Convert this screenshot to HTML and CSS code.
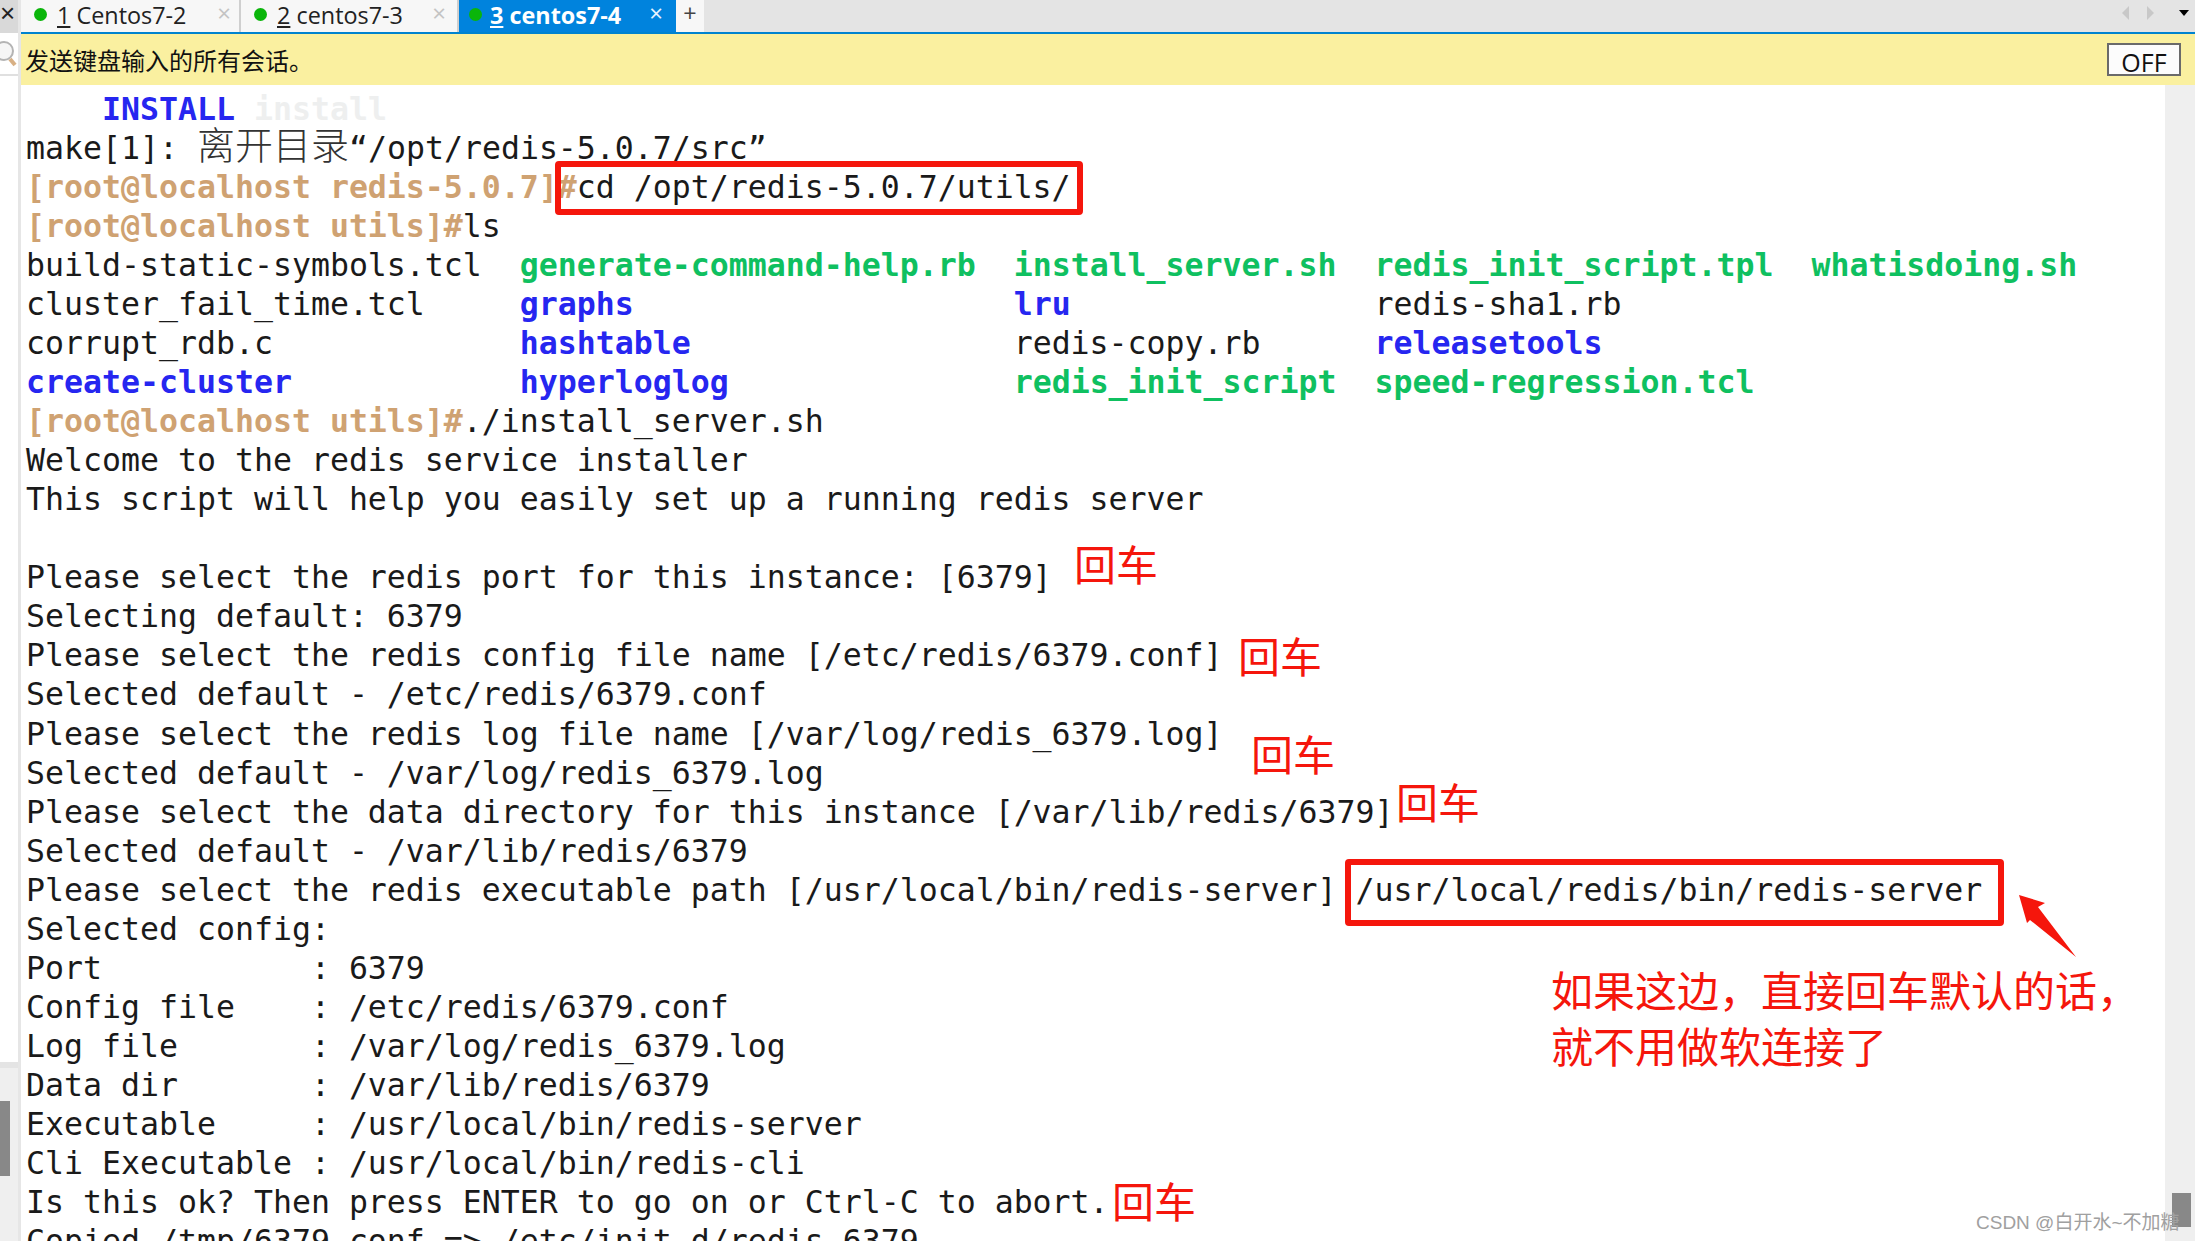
FILE: index.html
```html
<!DOCTYPE html>
<html>
<head>
  <title>centos7-4</title>
  <link rel="stylesheet" href="styles.css">
</head>
<body>

  <div class="app">

    <!-- Left strip -->
    <div class="side">
      <div class="side-close">×</div>
      <div class="side-search">
        <svg width="20" height="32" viewBox="0 0 20 32">
          <circle cx="4" cy="11" r="9" fill="#f6f6f6" stroke="#b4b4b4" stroke-width="2"/>
          <path d="M10 19 L15 25" stroke="#d8b084" stroke-width="4"/>
        </svg>
      </div>
      <div class="side-rest">
        <div class="side-lower">
          <div class="side-thumb"></div>
        </div>
      </div>
    </div>

    <div class="main">

      <!-- Tabs -->
      <div class="tabs">
        <div class="tab tab-1"><span class="dot"></span><span><u>1</u> Centos7-2</span><span class="tab-x">×</span></div>
        <div class="tab tab-2"><span class="dot"></span><span><u>2</u> centos7-3</span><span class="tab-x">×</span></div>
        <div class="tab tab-3 active"><span class="dot"></span><span><u>3</u> centos7-4</span><span class="tab-x">×</span></div>
        <div class="tab-add">+</div>
        <div class="tab-nav">
          <span class="arrow-left"></span>
          <span class="arrow-right"></span>
          <span class="arrow-down"></span>
        </div>
      </div>

      <!-- Send to all banner -->
      <div class="banner">
        <span>发送键盘输入的所有会话。</span>
        <button class="off">OFF</button>
      </div>

      <div class="body">
        <pre class="term">    <b class="blue">INSTALL</b> <b class="ghost">install</b>
make[1]: <span class="cjk">离开目录</span>“/opt/redis-5.0.7/src”
<b class="prompt">[root@localhost redis-5.0.7]#</b>cd /opt/redis-5.0.7/utils/
<b class="prompt">[root@localhost utils]#</b>ls
build-static-symbols.tcl  <b class="green">generate-command-help.rb</b>  <b class="green">install_server.sh</b>  <b class="green">redis_init_script.tpl</b>  <b class="green">whatisdoing.sh</b>
cluster_fail_time.tcl     <b class="blue">graphs</b>                    <b class="blue">lru</b>                redis-sha1.rb          
corrupt_rdb.c             <b class="blue">hashtable</b>                 redis-copy.rb      <b class="blue">releasetools</b>
<b class="blue">create-cluster</b>            <b class="blue">hyperloglog</b>               <b class="green">redis_init_script</b>  <b class="green">speed-regression.tcl</b>
<b class="prompt">[root@localhost utils]#</b>./install_server.sh
Welcome to the redis service installer
This script will help you easily set up a running redis server

Please select the redis port for this instance: [6379]
Selecting default: 6379
Please select the redis config file name [/etc/redis/6379.conf]
Selected default - /etc/redis/6379.conf
Please select the redis log file name [/var/log/redis_6379.log]
Selected default - /var/log/redis_6379.log
Please select the data directory for this instance [/var/lib/redis/6379]
Selected default - /var/lib/redis/6379
Please select the redis executable path [/usr/local/bin/redis-server] /usr/local/redis/bin/redis-server
Selected config:
Port           : 6379
Config file    : /etc/redis/6379.conf
Log file       : /var/log/redis_6379.log
Data dir       : /var/lib/redis/6379
Executable     : /usr/local/bin/redis-server
Cli Executable : /usr/local/bin/redis-cli
Is this ok? Then press ENTER to go on or Ctrl-C to abort.
Copied /tmp/6379.conf => /etc/init.d/redis_6379</pre>
        <div class="scrollbar"><div class="scroll-thumb"></div></div>
      </div>
    </div>

    <!-- Red notes drawn on top of the screenshot -->
    <div class="box box-cd"></div>
    <div class="box box-path"></div>
    <div class="note n1">回车</div>
    <div class="note n2">回车</div>
    <div class="note n3">回车</div>
    <div class="note n4">回车</div>
    <div class="note n5">回车</div>
    <div class="note n-big">如果这边，直接回车默认的话，<br>就不用做软连接了</div>
    <svg class="arrow" width="70" height="70" viewBox="0 0 70 70">
      <path d="M3 3 L29 11 L22 15 L60 65 L14 28 L11 31 Z" fill="#f5160c"/>
    </svg>
    <div class="mark">CSDN @白开水~不加糖</div>

  </div>

</body>
</html>
```

FILE: styles.css
```css
html, body {
  margin: 0;
  height: 100%;
  overflow: hidden;
  background-color: #fff;
}

.app {
  position: relative;
  display: flex;
  width: 2195px;
  height: 1241px;
  overflow: hidden;
}

/* Left strip */
.side {
  width: 21px;
  flex-shrink: 0;
  display: flex;
  flex-direction: column;
  border-right: 3px solid #e6e6e6;
  box-sizing: border-box;
}

.side-close {
  height: 33px;
  background-color: #d9d9d9;
  font: 26px/27px "Liberation Sans", sans-serif;
  color: #222;
  margin-left: -6px;
  padding-left: 6px;
  overflow: hidden;
  white-space: nowrap;
}

.side-search {
  height: 43px;
  padding-top: 7px;
  box-sizing: border-box;
  border-bottom: 2px solid #e0e0e0;
}

.side-rest {
  flex-grow: 1;
  display: flex;
  flex-direction: column;
  justify-content: flex-end;
}

.side-lower {
  height: 179px;
  border-top: 6px solid #e4e4e4;
  background-color: #efefef;
  padding-top: 33px;
  box-sizing: border-box;
}

.side-thumb {
  width: 10px;
  height: 75px;
  background-color: #888;
}

.main {
  flex-grow: 1;
  min-width: 0;
  display: flex;
  flex-direction: column;
}

/* Tabs */
.tabs {
  height: 32px;
  display: flex;
  background-color: #e4e4e4;
  border-bottom: 2px solid #0083cf;
  font-family: "Open Sans", "Noto Sans", sans-serif;
  font-size: 23.4px;
  color: #222;
}

.tab {
  display: flex;
  align-items: center;
  background-color: #f7f7f7;
  border-right: 2px solid #cfcfcf;
  box-sizing: border-box;
  padding-left: 13px;
  padding-bottom: 3px;
  position: relative;
}

.tab-1 { width: 220px; }
.tab-2 { width: 218px; }
.tab-3 { width: 217px; padding-left: 10px; }

.tab.active {
  background-color: #0083dd;
  color: #fff;
  font-weight: bold;
  border-right: none;
}

.dot {
  width: 13px;
  height: 13px;
  border-radius: 50%;
  background-color: #0ab50a;
  margin-right: 10px;
}

.tab-3 .dot {
  margin-right: 8px;
}

.tab-x {
  position: absolute;
  right: 8px;
  top: 3px;
  color: #c4c4c4;
  font-weight: normal;
  font-size: 24px;
  line-height: 20px;
}

.tab-2 .tab-x { right: 11px; }
.tab-3 .tab-x { right: 13px; }

.tab.active .tab-x {
  color: #e8f4ff;
}

.tab-add {
  width: 28px;
  text-align: center;
  background-color: #f7f7f7;
  line-height: 26px;
  color: #444;
}

.tab-nav {
  flex-grow: 1;
  display: flex;
  justify-content: flex-end;
  align-items: center;
  padding-right: 6px;
  padding-bottom: 6px;
}

.arrow-left {
  border-top: 7px solid transparent;
  border-bottom: 7px solid transparent;
  border-right: 7px solid #c8c8c8;
  margin-right: 18px;
}

.arrow-right {
  border-top: 7px solid transparent;
  border-bottom: 7px solid transparent;
  border-left: 7px solid #c8c8c8;
  margin-right: 25px;
}

.arrow-down {
  border-left: 5px solid transparent;
  border-right: 5px solid transparent;
  border-top: 6px solid #000;
}

/* Banner */
.banner {
  height: 51px;
  flex-shrink: 0;
  display: flex;
  align-items: center;
  justify-content: space-between;
  background-color: #faf0a0;
  padding: 0 14px 0 4px;
  font: 24px "Noto Sans CJK SC", sans-serif;
  color: #111;
}

.off {
  width: 74px;
  height: 33px;
  padding: 0 0 5px;
  background-color: #fcfcfc;
  border: 2px solid #6a6a6a;
  font: 25px "Open Sans", sans-serif;
  color: #111;
}

/* Terminal */
.body {
  flex-grow: 1;
  min-height: 0;
  display: flex;
}

.term {
  flex-grow: 1;
  min-width: 0;
  margin: 0;
  padding: 5px 0 0 5px;
  overflow: hidden;
  font-family: "DejaVu Sans Mono", "Noto Sans CJK SC", monospace;
  font-size: 31.55px;
  line-height: 39.03px;
  color: #1a1a1a;
}

.term b {
  font-weight: bold;
}

.cjk {
  font-family: "Noto Sans CJK SC", sans-serif;
  font-weight: 300;
  font-size: 38px;
  line-height: 1px;
  color: #333;
}

.blue { color: #2626f0; }
.green { color: #0fc060; }
.prompt { color: #cfa272; }
.ghost { color: #eeefef; }

.scrollbar {
  width: 30px;
  flex-shrink: 0;
  position: relative;
  background-color: #efefef;
}

.scroll-thumb {
  position: absolute;
  left: 7px;
  top: 1108px;
  width: 19px;
  height: 34px;
  background-color: #888;
}

/* Notes */
.box {
  position: absolute;
  border: 6px solid #f5160c;
  border-radius: 4px;
  box-sizing: border-box;
}

.box-cd {
  left: 555px;
  top: 161px;
  width: 528px;
  height: 54px;
}

.box-path {
  left: 1345px;
  top: 859px;
  width: 659px;
  height: 67px;
}

.note {
  position: absolute;
  font-family: "Noto Sans CJK SC", sans-serif;
  font-size: 42px;
  line-height: 56px;
  color: #f5160c;
  white-space: nowrap;
}

.n1 { left: 1074px; top: 535px; }
.n2 { left: 1238px; top: 627px; }
.n3 { left: 1251px; top: 725px; }
.n4 { left: 1396px; top: 773px; }
.n5 { left: 1112px; top: 1172px; }

.n-big {
  left: 1551px;
  top: 961px;
}

.arrow {
  position: absolute;
  left: 2016px;
  top: 892px;
}

.mark {
  position: absolute;
  left: 1976px;
  top: 1207px;
  font-family: "Liberation Sans", "Noto Sans CJK SC", sans-serif;
  font-size: 19px;
  color: #a0a0a0;
  white-space: nowrap;
}
```
